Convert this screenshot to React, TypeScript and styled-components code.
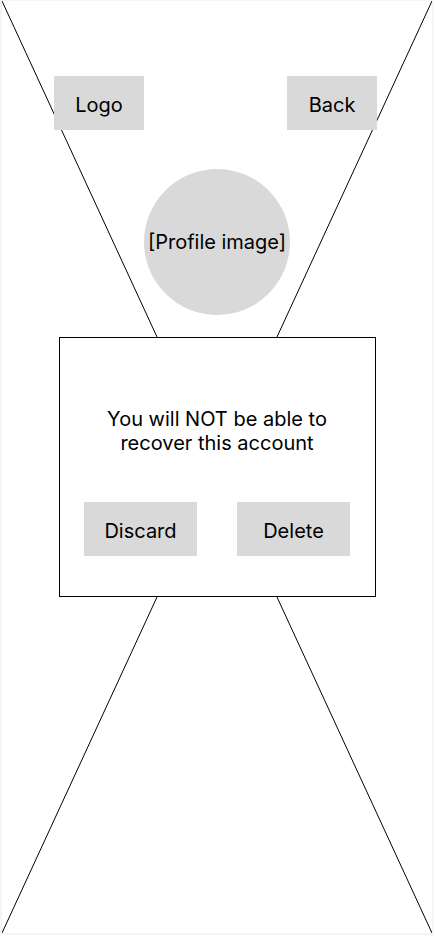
import React from "react";
import styled, { createGlobalStyle } from "styled-components";

const GlobalStyle = createGlobalStyle`
  html, body {
    margin: 0;
    padding: 0;
    background: #f5f5f5;
  }
  body {
    font-family: Inter, "Noto Sans", "Liberation Sans", sans-serif;
    color: #000;
  }
`;

const Frame = styled.div`
  position: relative;
  box-sizing: border-box;
  width: 430px;
  height: 932px;
  margin: 1px 2px 2px 2px;
  background: #ffffff;
  overflow: hidden;
`;

const Cross = styled.svg`
  position: absolute;
  inset: 0;
  width: 100%;
  height: 100%;
  z-index: 0;
`;

const Content = styled.div`
  position: relative;
  z-index: 1;
  display: flex;
  flex-direction: column;
  align-items: center;
`;

const Header = styled.header`
  align-self: stretch;
  display: flex;
  justify-content: space-between;
  padding: 75px 55px 0 52px;
`;

const Block = styled.button<{ $w: number }>`
  box-sizing: border-box;
  width: ${(p) => p.$w}px;
  height: 54px;
  border: none;
  border-radius: 0;
  background: #d9d9d9;
  font-family: Inter, "Noto Sans", "Liberation Sans", sans-serif;
  font-size: 20px;
  line-height: 24px;
  color: #000;
  padding: 3px 0 0;
  display: flex;
  align-items: center;
  justify-content: center;
`;

const Avatar = styled.div`
  margin-top: 39px;
  width: 146px;
  height: 146px;
  border-radius: 50%;
  background: #d9d9d9;
  display: flex;
  align-items: center;
  justify-content: center;
  font-size: 20px;
  line-height: 24px;
`;

const Modal = styled.section`
  margin-top: 22px;
  box-sizing: border-box;
  width: 317px;
  height: 260px;
  border: 1px solid #000;
  background: #fff;
  display: flex;
  flex-direction: column;
  align-items: center;
  padding-top: 69px;
`;

const Message = styled.p`
  margin: 0;
  font-size: 20px;
  line-height: 24px;
  text-align: center;
`;

const Actions = styled.div`
  display: flex;
  gap: 40px;
  margin-top: 47px;
`;

export default function App() {
  return (
    <>
      <GlobalStyle />
      <Frame>
        <Cross viewBox="0 0 430 932" preserveAspectRatio="none">
          <line x1="0" y1="0" x2="430" y2="932" stroke="#000" strokeWidth="1" />
          <line x1="430" y1="0" x2="0" y2="932" stroke="#000" strokeWidth="1" />
        </Cross>
        <Content>
          <Header>
            <Block $w={90}>Logo</Block>
            <Block $w={90}>Back</Block>
          </Header>
          <Avatar>[Profile image]</Avatar>
          <Modal>
            <Message>
              You will NOT be able to
              <br />
              recover this account
            </Message>
            <Actions>
              <Block $w={113}>Discard</Block>
              <Block $w={113}>Delete</Block>
            </Actions>
          </Modal>
        </Content>
      </Frame>
    </>
  );
}
